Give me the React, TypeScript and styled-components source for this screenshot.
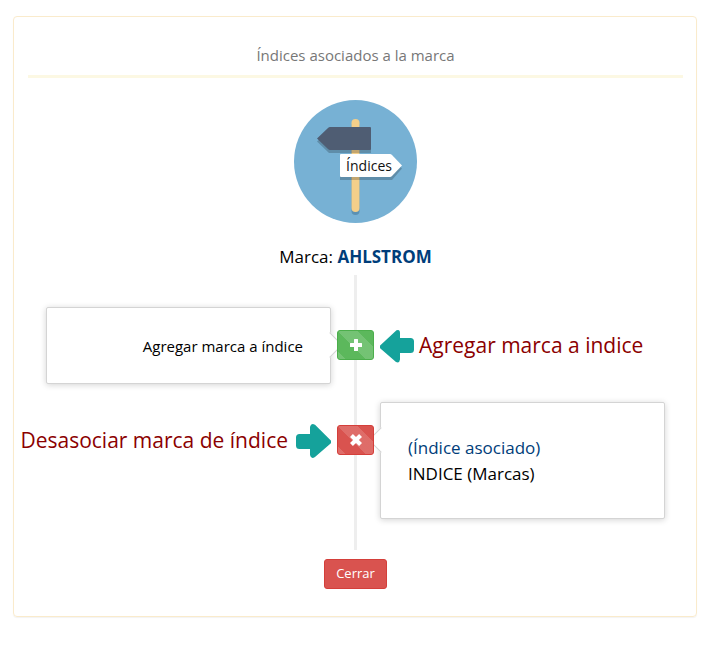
import React from "react";
import styled, { createGlobalStyle, css } from "styled-components";

const GlobalStyle = createGlobalStyle`
  *, *::before, *::after { box-sizing: border-box; }
  body {
    margin: 0;
    background: #fff;
    color: #000;
    font-family: "Open Sans", "Noto Sans", sans-serif;
    font-size: 15px;
    line-height: 26px;
  }
`;

const Page = styled.main`
  padding: 16px 16px 28px 13px;
`;

const Panel = styled.section`
  display: flex;
  flex-direction: column;
  align-items: center;
  padding: 25px 13px 27px 14px;
  border: 1px solid #faebcc;
  border-radius: 4px;
  box-shadow: 0 1px 1px rgba(0, 0, 0, 0.05);
`;

const Heading = styled.h1`
  align-self: stretch;
  margin: 0 0 22px;
  padding-bottom: 7px;
  border-bottom: 3px solid #fcf8e3;
  color: #777;
  font-size: 15px;
  font-weight: 400;
  text-align: center;
`;

const Emblem = styled.svg`
  display: block;
  width: 123px;
  height: 123px;
  font-size: 14px;
`;

const Brand = styled.p`
  margin: 21px 0 5px;
  font-size: 17px;

  strong {
    color: #003d7a;
    font-weight: 700;
  }
`;

const Timeline = styled.ul`
  align-self: stretch;
  display: flex;
  flex-direction: column;
  gap: 18px;
  margin: 0;
  padding: 32px 18px 31px;
  list-style: none;
  background: linear-gradient(#eee, #eee) center / 3px 100% no-repeat;
`;

const Entry = styled.li`
  display: grid;
  grid-template-columns: minmax(0, 1fr) 37px minmax(0, 1fr);
  column-gap: 6px;
  align-items: start;
`;

const Card = styled.div<{ $side: "left" | "right" }>`
  position: relative;
  border: 1px solid #d4d4d4;
  border-radius: 2px;
  background: #fff;
  box-shadow: 0 1px 6px rgba(0, 0, 0, 0.175);

  p {
    margin: 0;
  }

  &::before {
    content: "";
    position: absolute;
    top: 28px;
    width: 18px;
    height: 18px;
    background: #fff;
    transform: rotate(45deg);
  }

  ${({ $side }) =>
    $side === "left"
      ? css`
          padding: 25px 27px 24px;
          text-align: right;
          &::before {
            right: -9px;
            border-top: 1px solid #d4d4d4;
            border-right: 1px solid #d4d4d4;
          }
        `
      : css`
          padding: 32px 27px 31px;
          font-size: 17px;
          &::before {
            left: -9px;
            border-bottom: 1px solid #d4d4d4;
            border-left: 1px solid #d4d4d4;
          }
        `}
`;

const IndexLink = styled.a`
  color: #003d7a;
  text-decoration: none;
`;

const tones = {
  success: { fill: "#5cb85c", edge: "#4cae4c" },
  danger: { fill: "#d9534f", edge: "#d43f3a" },
};

const Button = styled.button<{ $tone: keyof typeof tones }>`
  display: flex;
  align-items: center;
  justify-content: center;
  height: 30px;
  border: 1px solid ${({ $tone }) => tones[$tone].edge};
  border-radius: 3px;
  background-color: ${({ $tone }) => tones[$tone].fill};
  color: #fff;
  font: inherit;
  cursor: pointer;
`;

const BadgeButton = styled(Button)`
  z-index: 1;
  width: 37px;
  margin-top: 23px;
  padding: 0;
  background-image: linear-gradient(
    45deg,
    rgba(255, 255, 255, 0.15) 25%,
    transparent 25%,
    transparent 50%,
    rgba(255, 255, 255, 0.15) 50%,
    rgba(255, 255, 255, 0.15) 75%,
    transparent 75%
  );
  background-size: 40px 40px;
`;

const CloseButton = styled(Button)`
  margin-top: 9px;
  padding: 0 11px 2px;
  font-size: 13px;
`;

const Note = styled.div<{ $side: "left" | "right" }>`
  display: flex;
  align-items: center;
  justify-content: ${({ $side }) => ($side === "left" ? "flex-end" : "flex-start")};
  gap: ${({ $side }) => ($side === "left" ? "8px" : "4px")};
  height: 30px;
  margin-top: 23px;
  color: #8b0000;
  font-size: 21px;
  white-space: nowrap;
`;

const Arrow = styled.svg`
  flex: none;
  display: block;
  width: 35px;
  height: 35px;
  fill: #15a29b;
`;

const Glyph = styled.svg`
  display: block;
  width: 14px;
  height: 14px;
  fill: #fff;
`;

const LeftArrow = () => (
  <Arrow viewBox="0 0 35 35" aria-hidden="true">
    <path d="M0.400 17.200 16.500 2.300Q20 1 20 5V10H30.500Q34 10 34 13.500V21.500Q34 25 30.500 25H20V31.500Q19.500 35.500 16 34L0.400 20.500Q-1 18.800 0.400 17.200Z" />
  </Arrow>
);

const RightArrow = () => (
  <Arrow viewBox="0 0 35 35" aria-hidden="true">
    <path d="M34.600 17.200 19 1.800Q15 -0.500 14 4V11H3.500Q0 11 0 14.500V22.500Q0 26 3.500 26H14V32Q15 36.500 19 34L34.600 20.500Q36 18.800 34.600 17.200Z" />
  </Arrow>
);

const Signpost = () => (
  <Emblem viewBox="0 0 123 123" role="img" aria-label="Índices">
    <circle cx="61.500" cy="61.500" r="61.500" fill="#77b1d4" />
    <rect x="57.500" y="22" width="8" height="93" rx="4" fill="#5b91b3" />
    <rect x="57.500" y="19" width="8" height="93" rx="4" fill="#f4cf8a" />
    <path d="M23 41.500 34 31H76Q77 31 77 32V53H35Z" fill="#000" opacity="0.2" />
    <path d="M23 38.500 34 28Q35 27 36 27H76Q77 27 77 28V49Q77 50 76 50H36Q35 50 34 49Z" fill="#4f5d73" />
    <path d="M46 57H97L108 68.500 98 80H46Z" fill="#000" opacity="0.2" />
    <path d="M47 54H96Q97 54 98 55L108 65.500 98 76Q97 77 96 77H47Q46 77 46 76V55Q46 54 47 54Z" fill="#fff" />
    <text x="75" y="71" textAnchor="middle" fill="#111">
      Índices
    </text>
  </Emblem>
);

export default function App() {
  return (
    <>
      <GlobalStyle />
      <Page>
        <Panel>
          <Heading>Índices asociados a la marca</Heading>
          <Signpost />
          <Brand>
            Marca: <strong>AHLSTROM</strong>
          </Brand>
          <Timeline>
            <Entry>
              <Card $side="left">
                <p>Agregar marca a índice</p>
              </Card>
              <BadgeButton type="button" $tone="success" aria-label="Agregar marca a índice">
                <Glyph viewBox="0 0 14 14" aria-hidden="true">
                  <path d="M5.500 1h3q.5 0 .5.500V5h3.500q.5 0 .5.500v3q0 .5-.5.500H9v3.500q0 .5-.5.500h-3q-.5 0-.5-.5V9H1.500q-.5 0-.5-.5v-3q0-.5.5-.5H5V1.500q0-.5.500-.5Z" />
                </Glyph>
              </BadgeButton>
              <Note $side="right">
                <LeftArrow />
                <span>Agregar marca a indice</span>
              </Note>
            </Entry>
            <Entry>
              <Note $side="left">
                <span>Desasociar marca de índice</span>
                <RightArrow />
              </Note>
              <BadgeButton type="button" $tone="danger" aria-label="Desasociar marca de índice">
                <Glyph viewBox="0 0 14 14" aria-hidden="true">
                  <path d="M3.900 1 7 4.100 10.100 1 13 3.900 9.900 7 13 10.100 10.100 13 7 9.900 3.900 13 1 10.100 4.100 7 1 3.900Z" />
                </Glyph>
              </BadgeButton>
              <Card $side="right">
                <p>
                  <IndexLink href="#indice">(Índice asociado)</IndexLink>
                </p>
                <p>INDICE (Marcas)</p>
              </Card>
            </Entry>
          </Timeline>
          <CloseButton type="button" $tone="danger">
            Cerrar
          </CloseButton>
        </Panel>
      </Page>
    </>
  );
}
